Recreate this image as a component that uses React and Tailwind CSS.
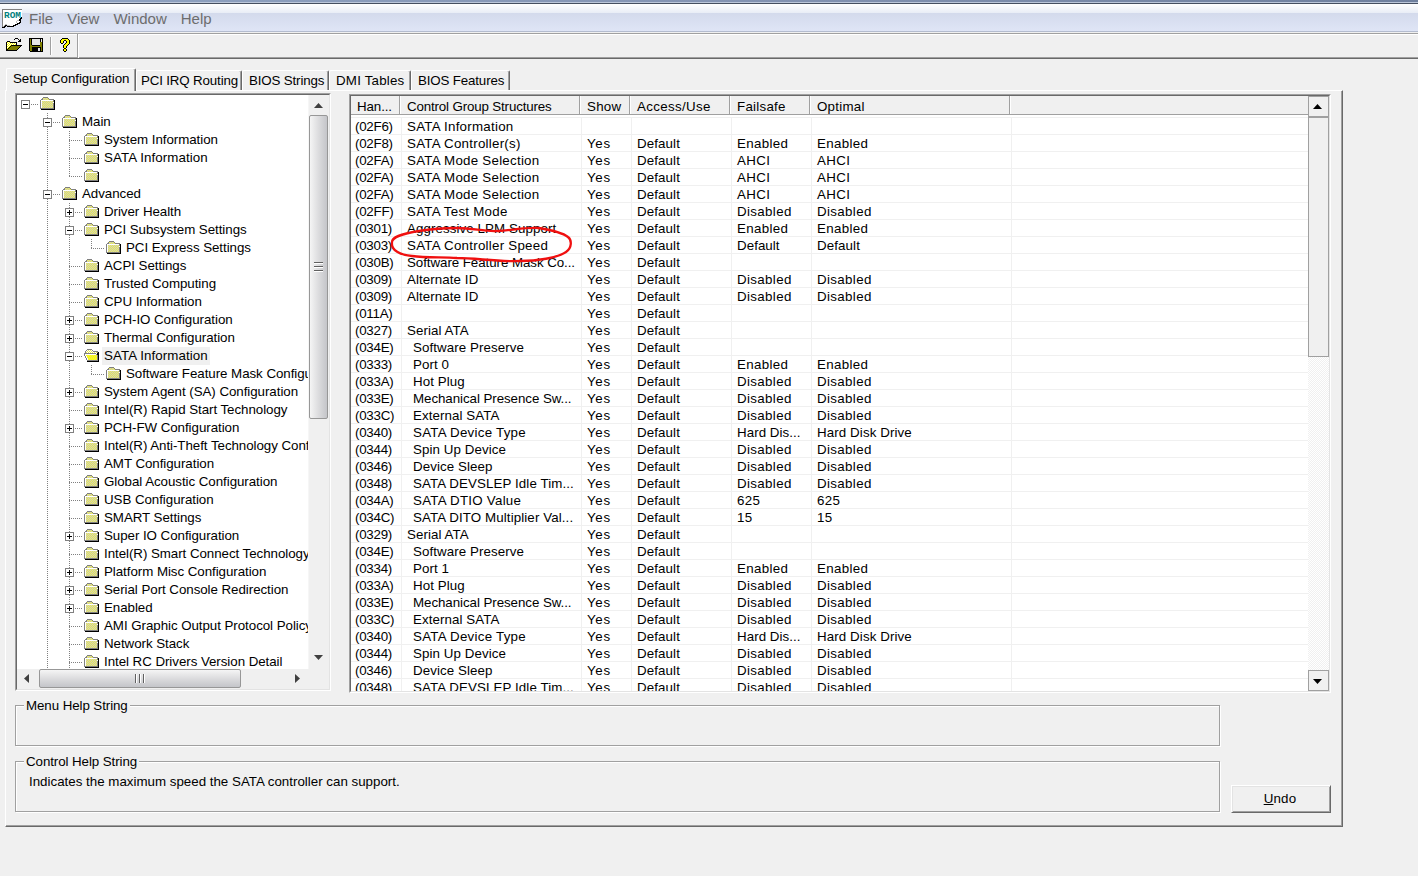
import React from 'react'

const palette = {
  k: '#000000',
  y: '#ffff00',
  w: '#ffffff',
  o: '#808000',
  g: '#c0c0c0',
  d: '#808080',
  a: '#eaea50',
  b: '#cfcfc0',
  s: '#e6e6e6'
}

const icons = {
  paper: [
    'dddddddddddddddddddd',
    'dwwwwwwwwwwwwwwwwwww',
    'dwwwwwwwwwwwwwwwwwww',
    'dwwwwwwwwwwwwwwwwwww',
    'dwwwwwwwwwwwwwwwwwww',
    'dwwwwwwwwwwwwwwwwwww',
    'dwwwwwwwwwwwwwwwwwww',
    'dwwwwwwwwwwwwwwwwwww',
    'dwwwwwwwwwwwwwwwwwwk',
    'dwwwwwwwwwwwwwwwwwkk',
    'dwwwwwwwwwwwwwwwwkk.',
    'dwwwwwwwwwwwwwwggkk.',
    'dwwwwwwwwwwwwwgwwwk.',
    'dwwwwwwwwwwwwwgwwkk.',
    'dwwwwwwwwwwwwwwkkk..',
    'dwwggwwwwwwwwkkk....',
    'dwgkkgggwwwkkk......',
    'dgkk.kkkkkkk........',
    'kkk.................'
  ],
  open: [
    '.........kkk....',
    '........k...k.k.',
    '.............kk.',
    '.kkk........kkk.',
    'kywykkkkkkk.....',
    'kwywywywywk.....',
    'kywywywywyk.....',
    'kwywykkkkkkkkkkk',
    'kywykoooooooook.',
    'kwykoooooooook..',
    'kykoooooooook...',
    'kkoooooooook....',
    'kkkkkkkkkkk.....'
  ],
  save: [
    'kkkkkkkkkkkkkk',
    'kokssssssssksk',
    'kokssssssssk.k',
    'kokssssssssk.k',
    'kokssssssssook',
    'kokssssssssook',
    'kokssssssssook',
    'kookkkkkkkkook',
    'kooooooooooook',
    'kookkkkkkkkkok',
    'kookkkkkksskok',
    'kookkkkkksskok',
    'kookkkkkksskok',
    '.kkkkkkkkkkkkk'
  ],
  help: [
    '..kkkkkk..',
    '.kyyyyyyk.',
    'kyyykkyyyk',
    'kyyk..kyyk',
    'kyyk..kyyk',
    '.kk..kyyyk',
    '....kyyyk.',
    '...kyyyk..',
    '...kyyk...',
    '...kyyk...',
    '....kk....',
    '...kyyk...',
    '...kyyk...',
    '....kk....'
  ],
  folder: [
    '...ddddd.......',
    '..dababad......',
    '.ddbababaddddd.',
    'dwwwwwwwwwwwwdk',
    'dwabababababadk',
    'dwbababababab.k',
    'dwabababababadk',
    'dwbabababababdk',
    'dwabababababadk',
    'dwbabababababdk',
    'dwabababababadk',
    'ddddddddddddddk',
    '.kkkkkkkkkkkkkk'
  ],
  folderOpen: [
    '...ddddd.......',
    '..dwawawd......',
    '.dwawawawddddd.',
    '.dawawawawawadk',
    'ddddddddddddwkk',
    'dwwwwwwwwwwwdkk',
    'dwyayayayayaydk',
    '.dwyayayayayadk',
    '.dwayayayayaydk',
    '..dwyayayayaydk',
    '..dwayayayayadk',
    '...dddddddddddk',
    '...kkkkkkkkkkkk'
  ]
}

const PixelIcon = ({ name, className }) => {
  const rows = icons[name]
  return (
    <svg
      width={rows[0].length}
      height={rows.length}
      shapeRendering="crispEdges"
      className={`block shrink-0 ${className || ''}`}
    >
      {rows.map((row, y) =>
        row.split('').map((c, x) =>
          c === '.' ? null : <rect key={`${x}-${y}`} x={x} y={y} width="1" height="1" fill={palette[c]} />
        )
      )}
    </svg>
  )
}

const menus = ['File', 'View', 'Window', 'Help']

const tabs = [
  { label: 'PCI IRQ Routing', className: 'w-[106px] pl-[5px]' },
  { label: 'BIOS Strings', className: 'w-[87px] pl-[7px]' },
  { label: 'DMI Tables', className: 'w-[82px] pl-[7px] tracking-[0.2px]' },
  { label: 'BIOS Features', className: 'w-[99px] pl-[7px]' }
]

const tree = [
  { depth: 0, label: '', box: '-', last: true },
  { depth: 1, label: 'Main', box: '-' },
  { depth: 2, label: 'System Information' },
  { depth: 2, label: 'SATA Information' },
  { depth: 2, label: '', last: true },
  { depth: 1, label: 'Advanced', box: '-' },
  { depth: 2, label: 'Driver Health', box: '+' },
  { depth: 2, label: 'PCI Subsystem Settings', box: '-' },
  { depth: 3, label: 'PCI Express Settings', last: true },
  { depth: 2, label: 'ACPI Settings' },
  { depth: 2, label: 'Trusted Computing' },
  { depth: 2, label: 'CPU Information' },
  { depth: 2, label: 'PCH-IO Configuration', box: '+' },
  { depth: 2, label: 'Thermal Configuration', box: '+' },
  { depth: 2, label: 'SATA Information', box: '-', selected: true },
  { depth: 3, label: 'Software Feature Mask Configuration', last: true },
  { depth: 2, label: 'System Agent (SA) Configuration', box: '+' },
  { depth: 2, label: 'Intel(R) Rapid Start Technology' },
  { depth: 2, label: 'PCH-FW Configuration', box: '+' },
  { depth: 2, label: 'Intel(R) Anti-Theft Technology Configuration' },
  { depth: 2, label: 'AMT Configuration' },
  { depth: 2, label: 'Global Acoustic Configuration' },
  { depth: 2, label: 'USB Configuration' },
  { depth: 2, label: 'SMART Settings' },
  { depth: 2, label: 'Super IO Configuration', box: '+' },
  { depth: 2, label: 'Intel(R) Smart Connect Technology' },
  { depth: 2, label: 'Platform Misc Configuration', box: '+' },
  { depth: 2, label: 'Serial Port Console Redirection', box: '+' },
  { depth: 2, label: 'Enabled', box: '+' },
  { depth: 2, label: 'AMI Graphic Output Protocol Policy' },
  { depth: 2, label: 'Network Stack' },
  { depth: 2, label: 'Intel RC Drivers Version Detail' }
]

// handle, name, indent, show, access, failsafe, optimal
const rows = [
  ['(02F6)', 'SATA Information', 0, '', '', '', ''],
  ['(02F8)', 'SATA Controller(s)', 0, 'Yes', 'Default', 'Enabled', 'Enabled'],
  ['(02FA)', 'SATA Mode Selection', 0, 'Yes', 'Default', 'AHCI', 'AHCI'],
  ['(02FA)', 'SATA Mode Selection', 0, 'Yes', 'Default', 'AHCI', 'AHCI'],
  ['(02FA)', 'SATA Mode Selection', 0, 'Yes', 'Default', 'AHCI', 'AHCI'],
  ['(02FF)', 'SATA Test Mode', 0, 'Yes', 'Default', 'Disabled', 'Disabled'],
  ['(0301)', 'Aggressive LPM Support', 0, 'Yes', 'Default', 'Enabled', 'Enabled'],
  ['(0303)', 'SATA Controller Speed', 0, 'Yes', 'Default', 'Default', 'Default'],
  ['(030B)', 'Software Feature Mask Co...', 0, 'Yes', 'Default', '', ''],
  ['(0309)', 'Alternate ID', 0, 'Yes', 'Default', 'Disabled', 'Disabled'],
  ['(0309)', 'Alternate ID', 0, 'Yes', 'Default', 'Disabled', 'Disabled'],
  ['(011A)', '', 0, 'Yes', 'Default', '', ''],
  ['(0327)', 'Serial ATA', 0, 'Yes', 'Default', '', ''],
  ['(034E)', 'Software Preserve', 1, 'Yes', 'Default', '', ''],
  ['(0333)', 'Port 0', 1, 'Yes', 'Default', 'Enabled', 'Enabled'],
  ['(033A)', 'Hot Plug', 1, 'Yes', 'Default', 'Disabled', 'Disabled'],
  ['(033E)', 'Mechanical Presence Sw...', 1, 'Yes', 'Default', 'Disabled', 'Disabled'],
  ['(033C)', 'External SATA', 1, 'Yes', 'Default', 'Disabled', 'Disabled'],
  ['(0340)', 'SATA Device Type', 1, 'Yes', 'Default', 'Hard Dis...', 'Hard Disk Drive'],
  ['(0344)', 'Spin Up Device', 1, 'Yes', 'Default', 'Disabled', 'Disabled'],
  ['(0346)', 'Device Sleep', 1, 'Yes', 'Default', 'Disabled', 'Disabled'],
  ['(0348)', 'SATA DEVSLEP Idle Tim...', 1, 'Yes', 'Default', 'Disabled', 'Disabled'],
  ['(034A)', 'SATA DTIO Value', 1, 'Yes', 'Default', '625', '625'],
  ['(034C)', 'SATA DITO Multiplier Val...', 1, 'Yes', 'Default', '15', '15'],
  ['(0329)', 'Serial ATA', 0, 'Yes', 'Default', '', ''],
  ['(034E)', 'Software Preserve', 1, 'Yes', 'Default', '', ''],
  ['(0334)', 'Port 1', 1, 'Yes', 'Default', 'Enabled', 'Enabled'],
  ['(033A)', 'Hot Plug', 1, 'Yes', 'Default', 'Disabled', 'Disabled'],
  ['(033E)', 'Mechanical Presence Sw...', 1, 'Yes', 'Default', 'Disabled', 'Disabled'],
  ['(033C)', 'External SATA', 1, 'Yes', 'Default', 'Disabled', 'Disabled'],
  ['(0340)', 'SATA Device Type', 1, 'Yes', 'Default', 'Hard Dis...', 'Hard Disk Drive'],
  ['(0344)', 'Spin Up Device', 1, 'Yes', 'Default', 'Disabled', 'Disabled'],
  ['(0346)', 'Device Sleep', 1, 'Yes', 'Default', 'Disabled', 'Disabled'],
  ['(0348)', 'SATA DEVSLEP Idle Tim...', 1, 'Yes', 'Default', 'Disabled', 'Disabled']
]

const columns = [
  { label: 'Han...', className: 'w-[49px] pl-[6px] tracking-[-0.1px]' },
  { label: 'Control Group Structures', className: 'w-[180px] pl-[7px] tracking-[-0.15px]' },
  { label: 'Show', className: 'w-[50px] pl-[7px]' },
  { label: 'Access/Use', className: 'w-[100px] pl-[7px] tracking-[0.35px]' },
  { label: 'Failsafe', className: 'w-[80px] pl-[7px]' },
  { label: 'Optimal', className: 'w-[200px] pl-[7px]' }
]

const nameTracking = (name) => {
  if (name.endsWith('...')) {
    return name.startsWith('SATA') ? 'tracking-[0.1px]' : 'tracking-[-0.06px]'
  }
  if (name.startsWith('SATA')) return 'tracking-[0.25px]'
  return 'tracking-[0.08px]'
}

// One 22px wide slot of connector lines in the tree
const TreeSlot = ({ full, half, across, box }) => (
  <svg width="22" height="18" shapeRendering="crispEdges" className="block shrink-0">
    {full && <path d="M8.5 0V18" stroke="#808080" strokeDasharray="1 1" />}
    {half && <path d="M8.5 0V10" stroke="#808080" strokeDasharray="1 1" />}
    {across && <path d="M8 9.5H22" stroke="#808080" strokeDasharray="1 1" />}
    {box && <rect x="4.5" y="5.5" width="8" height="8" fill="#fff" stroke="#808080" />}
    {box && <path d="M6 9.5H11" stroke="#000" />}
    {box === '+' && <path d="M8.5 7V12" stroke="#000" />}
  </svg>
)

const TreeRow = ({ node }) => {
  const slots = []
  for (let i = 0; i < node.depth; i++) {
    slots.push(<TreeSlot key={i} full={i > 0} />)
  }
  return (
    <div className="flex h-[18px] items-start tracking-[-0.05px] whitespace-nowrap">
      {slots}
      <TreeSlot full={!node.last} half={node.last && node.depth > 0} across box={node.box} />
      <PixelIcon name={node.selected ? 'folderOpen' : 'folder'} className="mt-[2px] ml-px" />
      {node.label && (
        <span
          className={`ml-[3px] h-[18px] px-[2px] leading-[18px] ${node.selected ? 'bg-[#f0f0f0]' : ''} ${
            node.label.startsWith('SATA') ? 'tracking-[0.08px]' : ''
          }`}
        >
          {node.label}
        </span>
      )}
    </div>
  )
}

const Arrow = ({ dir, color }) => {
  const paths = {
    up: 'M0 5L4.5 0L9 5Z',
    down: 'M0 0L4.5 5L9 0Z',
    left: 'M5 0L0 4.5L5 9Z',
    right: 'M0 0L5 4.5L0 9Z'
  }
  const flat = dir === 'up' || dir === 'down'
  return (
    <svg width={flat ? 9 : 5} height={flat ? 5 : 9} className="block shrink-0">
      <path d={paths[dir]} fill={color || '#404040'} />
    </svg>
  )
}

const TreePanel = () => (
  <div className="mt-[2px] ml-[9px] h-[598px] w-[316px] border-t border-r border-b border-l border-t-[#a0a0a0] border-r-white border-b-white border-l-[#a0a0a0]">
    <div className="flex h-full flex-col border border-t-[#696969] border-r-[#e3e3e3] border-b-[#e3e3e3] border-l-[#696969]">
      <div className="flex h-[574px]">
        <div className="h-full w-[291px] overflow-hidden bg-white">
          {tree.map((node, i) => (
            <TreeRow key={i} node={node} />
          ))}
        </div>
        <div className="flex w-[21px] flex-col items-start border-l border-[#f6f6f6] bg-[#f0f0f0]">
          <div className="flex h-[20px] w-[19px] items-center justify-center">
            <Arrow dir="up" />
          </div>
          <div className="flex h-[304px] w-[19px] flex-col items-center justify-center gap-[2px] rounded-[2px] border border-[#979797] bg-linear-to-r from-[#f5f5f5] via-[#dcdcde] to-[#c4c5c9]">
            <div className="h-[2px] w-[9px] border-b border-white bg-[#606060]"></div>
            <div className="h-[2px] w-[9px] border-b border-white bg-[#606060]"></div>
            <div className="h-[2px] w-[9px] border-b border-white bg-[#606060]"></div>
          </div>
          <div className="flex-1"></div>
          <div className="flex h-6 w-[19px] items-center justify-center">
            <Arrow dir="down" />
          </div>
        </div>
      </div>
      <div className="flex h-5 items-start bg-[#f0f0f0]">
        <div className="flex h-[19px] w-[19px] items-center justify-center">
          <Arrow dir="left" />
        </div>
        <div className="ml-[3px] flex h-[19px] w-[202px] items-center justify-center gap-[2px] rounded-[2px] border border-[#979797] bg-linear-to-b from-[#f5f5f5] via-[#dcdcde] to-[#c4c5c9]">
          <div className="h-[9px] w-[2px] border-r border-white bg-[#606060]"></div>
          <div className="h-[9px] w-[2px] border-r border-white bg-[#606060]"></div>
          <div className="h-[9px] w-[2px] border-r border-white bg-[#606060]"></div>
        </div>
        <div className="ml-[54px] flex h-[19px] items-center">
          <Arrow dir="right" />
        </div>
      </div>
    </div>
  </div>
)

const ListPanel = () => (
  <div className="mt-[3px] ml-[18px] h-[599px] w-[982px] border border-t-[#a0a0a0] border-r-white border-b-white border-l-[#a0a0a0]">
    <div className="flex h-full border border-t-[#696969] border-r-[#e3e3e3] border-b-[#e3e3e3] border-l-[#696969] bg-white">
      <div className="h-full w-[957px] overflow-hidden">
        <div className="flex h-[19px] border-b border-[#a0a0a0] bg-[#f0f0f0] tracking-[0.25px]">
          {columns.map((col) => (
            <div
              key={col.label}
              className={`h-[18px] shrink-0 border-r border-[#a0a0a0] leading-[21px] shadow-[1px_0_0_#fff] ${col.className}`}
            >
              {col.label}
            </div>
          ))}
        </div>
        <div className="h-[3px] border-b border-[#f0f0f0]"></div>
        {rows.map(([handle, name, indent, show, access, failsafe, optimal], i) => (
          <div
            key={i}
            className="flex h-[17px] border-b border-[#f0f0f0] leading-[17px] tracking-[0.35px] whitespace-nowrap"
          >
            <div className="w-[51px] shrink-0 border-r border-[#f0f0f0] pl-[4px] tracking-[-0.25px]">{handle}</div>
            <div
              className={`w-[180px] shrink-0 border-r border-[#f0f0f0] ${nameTracking(name)} ${indent ? 'pl-[11px]' : 'pl-[5px]'}`}
            >
              {name}
            </div>
            <div className="w-[50px] shrink-0 border-r border-[#f0f0f0] pl-[5px] tracking-[0.7px]">{show}</div>
            <div className="w-[100px] shrink-0 border-r border-[#f0f0f0] pl-[5px] tracking-[0.1px]">{access}</div>
            <div
              className={`w-[80px] shrink-0 border-r border-[#f0f0f0] pl-[5px] ${
                failsafe === 'Default' || failsafe.endsWith('...') ? 'tracking-[0.05px]' : ''
              }`}
            >
              {failsafe}
            </div>
            <div
              className={`w-[200px] shrink-0 border-r border-[#f0f0f0] pl-[5px] ${
                optimal === 'Default' || optimal.startsWith('Hard') ? 'tracking-[0.1px]' : ''
              }`}
            >
              {optimal}
            </div>
          </div>
        ))}
      </div>
      <div className="flex w-[21px] flex-col bg-[repeating-conic-gradient(#f0f0f0_0_25%,#ffffff_0_50%)] bg-size-[2px_2px]">
        <div className="flex h-[21px] items-center justify-center border border-[#a0a0a0] bg-[#f0f0f0] pr-[2px]">
          <Arrow dir="up" color="#000" />
        </div>
        <div className="h-[240px] border border-[#a0a0a0] bg-[#f0f0f0]"></div>
        <div className="flex-1"></div>
        <div className="flex h-[21px] items-center justify-center border border-[#a0a0a0] bg-[#f0f0f0] pt-px pr-[2px]">
          <Arrow dir="down" color="#000" />
        </div>
      </div>
    </div>
  </div>
)

const HelpGroup = ({ title, className, children }) => (
  <div
    className={`w-[1205px] border border-[#a0a0a0] shadow-[1px_1px_0_#fff,inset_1px_1px_0_#fff] ${className}`}
  >
    <div className="-mt-[9px] ml-[8px] h-[17px] w-fit bg-[#f0f0f0] px-[2px] leading-[17px] tracking-[-0.08px]">
      {title}
    </div>
    {children}
  </div>
)

const App = () => {
  return (
    <div className="relative flex h-[876px] w-[1418px] flex-col overflow-hidden bg-[#f0f0f0] font-['Liberation_Sans',Arial,sans-serif] text-[13.33px] text-black">
      {/* Window frame edge */}
      <div className="h-[2px] bg-linear-to-r from-[#8fa3c2] via-[#8494b3] to-[#6f809e]"></div>
      <div className="h-px bg-[#bcc7da]"></div>
      <div className="h-px bg-[#454f60]"></div>

      {/* Menu bar */}
      <div className="flex h-[28px] items-center border-b border-[#b4bccf] bg-[linear-gradient(#ffffff_0,#e8edf6_9px,#d3daec_9px,#dfe5f6_27px)] pl-[2px] text-[15px] text-[#6d6d6d]">
        <div className="relative mt-px">
          <PixelIcon name="paper" />
          <svg width="20" height="10" className="absolute top-0 left-0">
            <text
              x="2"
              y="8.5"
              textLength="17"
              lengthAdjust="spacingAndGlyphs"
              className="fill-[#008080] font-['Liberation_Mono',monospace] text-[9.5px] font-bold"
            >
              ROM
            </text>
          </svg>
        </div>
        <div className="mt-[3px] ml-[7px] flex gap-[14px]">
          {menus.map((menu) => (
            <span key={menu}>{menu}</span>
          ))}
        </div>
      </div>

      {/* Toolbar */}
      <div className="mt-px flex h-[26px] border-t border-b border-t-[#a0a0a0] border-b-[#696969] shadow-[inset_0_1px_0_#fff,inset_0_-1px_0_#a0a0a0]">
        <div className="flex w-[78px] items-start border-r border-[#a0a0a0] pl-[6px] shadow-[1px_0_0_#fff]">
          <PixelIcon name="open" className="mt-[4px]" />
          <PixelIcon name="save" className="mt-[4px] ml-[7px]" />
          <div className="mt-[3px] ml-[7px] h-[18px] w-[2px] border-r border-white bg-[#a0a0a0]"></div>
          <PixelIcon name="help" className="mt-[4px] ml-[8px]" />
        </div>
      </div>

      {/* Tabs */}
      <div className="mt-[9px] ml-[6px] flex h-[22px] items-end tracking-[-0.15px]">
        <div className="z-10 -mb-px h-[23px] w-[130px] rounded-t-[2px] border-t border-r border-l border-t-white border-r-[#696969] border-l-white bg-[#f0f0f0] pl-[6px] leading-[19px] tracking-[-0.08px] shadow-[inset_-1px_0_0_#a0a0a0]">
          Setup Configuration
        </div>
        {tabs.map((tab) => (
          <div
            key={tab.label}
            className={`h-[20px] rounded-t-[2px] border-t border-r border-t-white border-r-[#696969] leading-[19px] whitespace-nowrap shadow-[inset_-1px_0_0_#a0a0a0,inset_1px_0_0_#fff] ${tab.className}`}
          >
            {tab.label}
          </div>
        ))}
      </div>

      {/* Tab page */}
      <div className="ml-[5px] h-[737px] w-[1338px] border border-t-white border-r-[#696969] border-b-[#696969] border-l-white shadow-[inset_-1px_-1px_0_#a0a0a0]">
        <div className="flex">
          <TreePanel />
          <ListPanel />
        </div>
        <div className="mt-[12px] ml-[9px] flex items-end">
          <div>
            <HelpGroup title="Menu Help String" className="h-[41px]" />
            <HelpGroup title="Control Help String" className="mt-[15px] h-[51px]">
              <p className="mt-[3px] ml-[13px] leading-[17px]">
                Indicates the maximum speed the SATA controller can support.
              </p>
            </HelpGroup>
          </div>
          <button className="-mb-px ml-[11px] h-[28px] w-[100px] border border-t-white border-r-[#696969] border-b-[#696969] border-l-white pr-[2px] tracking-[0.2px] shadow-[inset_1px_1px_0_#e3e3e3,inset_-1px_-1px_0_#a0a0a0]">
            <span className="underline">U</span>ndo
          </button>
        </div>
      </div>

      {/* Hand drawn marker round the speed setting */}
      <svg width="190" height="42" className="absolute top-[223px] left-[386px]" fill="none" stroke="#f01010" strokeWidth="2.3">
        <path d="M71 5C55 5 45 6 33 8C15 11 5 14 6 20C5 27 14 32 26 33C40 35 56 34 71 35C90 35 112 39 134 38C151 38 171 35 180 29C186 25 186 17 182 14C177 10 165 7 153 5C140 4 128 7 112 8C98 9 88 5 71 5" />
      </svg>
    </div>
  )
}

export default App
